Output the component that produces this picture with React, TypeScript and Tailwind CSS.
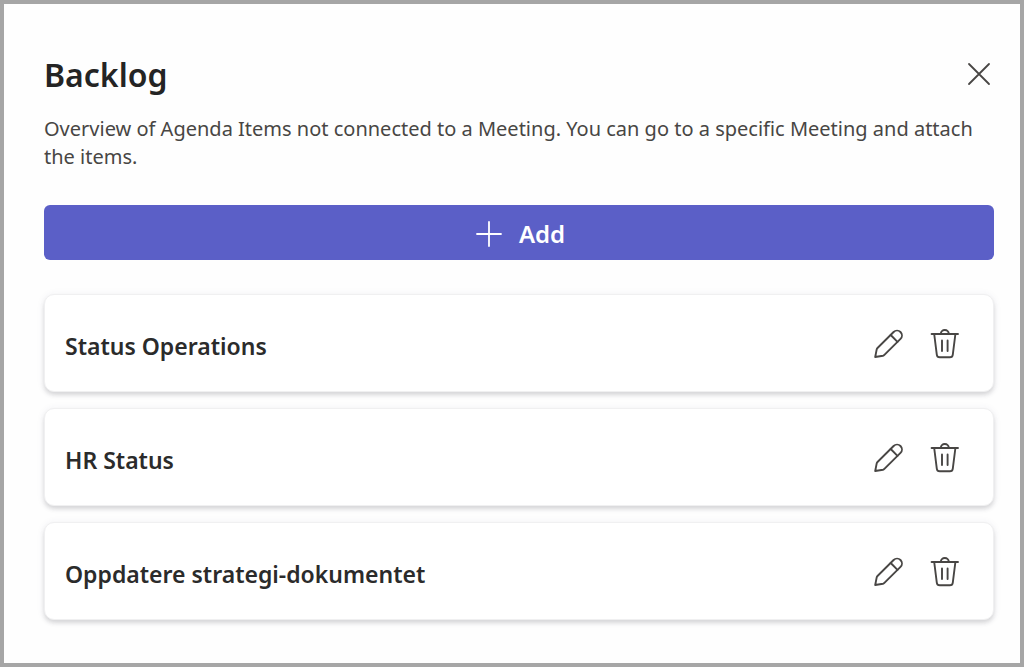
const BACKLOG_ITEMS = [
  { id: 1, title: "Status Operations" },
  { id: 2, title: "HR Status" },
  { id: 3, title: "Oppdatere strategi-dokumentet" },
];

function CloseIcon() {
  return (
    <svg
      viewBox="0 0 24 24"
      className="size-6"
      fill="none"
      stroke="currentColor"
      strokeWidth="1.8"
      strokeLinecap="round"
      aria-hidden="true"
    >
      <path d="M2 2l20 20M22 2L2 22" />
    </svg>
  );
}

function PlusIcon() {
  return (
    <svg
      viewBox="0 0 28 28"
      className="size-7"
      fill="none"
      stroke="currentColor"
      strokeWidth="1.8"
      strokeLinecap="round"
      aria-hidden="true"
    >
      <path d="M14 2v24M2 14h24" />
    </svg>
  );
}

function PencilIcon() {
  return (
    <svg
      viewBox="0 0 32 32"
      className="size-8"
      fill="none"
      stroke="currentColor"
      strokeWidth="1.9"
      strokeLinecap="round"
      strokeLinejoin="round"
      aria-hidden="true"
    >
      <path d="M3.2 29l1.5-7.6c.1-.5.4-1 .8-1.4L21.6 4a4.9 4.9 0 0 1 6.9 0 4.9 4.9 0 0 1 0 6.9L12.4 26.9c-.4.4-.9.7-1.4.8z" />
      <path d="M18.7 7l6.8 6.9" />
    </svg>
  );
}

function TrashIcon() {
  return (
    <svg
      viewBox="0 0 32 32"
      className="size-8"
      fill="none"
      stroke="currentColor"
      strokeWidth="1.9"
      strokeLinecap="round"
      strokeLinejoin="round"
      aria-hidden="true"
    >
      <path d="M3.6 6H30" />
      <path d="M12.8 6a4 4 0 0 1 8 0" />
      <path d="M6.2 6l2.6 20.6a3 3 0 0 0 3 2.7h10a3 3 0 0 0 3-2.7L27.4 6" />
      <path d="M14 12.500V23M19.600 12.500V23" />
    </svg>
  );
}

function BacklogCard({ title }: { title: string }) {
  return (
    <li className="flex h-[98px] items-center justify-between rounded-[10px] border border-[#f0f0f1] bg-white pt-0.5 pr-[33px] pl-5 shadow-[0_3px_4px_rgba(0,0,0,0.13),0_1px_8px_rgba(60,60,120,0.07)]">
      <h2 className="pt-1 text-[23px] font-semibold text-[#2b2b2b]">{title}</h2>
      <div className="flex gap-6 text-[#484644]">
        <button type="button" aria-label={`Edit ${title}`}>
          <PencilIcon />
        </button>
        <button type="button" aria-label={`Delete ${title}`}>
          <TrashIcon />
        </button>
      </div>
    </li>
  );
}

export default function App() {
  return (
    <main className="min-h-screen border-4 border-[#a6a6a6] bg-[#fefefe] pt-12 pr-[26px] pb-10 pl-10 font-['Noto_Sans','Open_Sans',sans-serif]">
      <header>
        <div className="flex items-center justify-between">
          <h1 className="text-[32px] leading-[46px] font-semibold text-[#242424]">
            Backlog
          </h1>
          <button
            type="button"
            aria-label="Close"
            className="mr-[3px] pb-0.5 text-[#484644]"
          >
            <CloseIcon />
          </button>
        </div>
        <p className="mt-[17px] text-xl leading-7 text-[#484644]">
          Overview of Agenda Items not connected to a Meeting. You can go to a
          specific Meeting and attach the items.
        </p>
      </header>

      <button
        type="button"
        className="mt-[34px] flex h-[55px] w-full items-center justify-center gap-4 rounded-md bg-[#5b5fc7] pt-0.5 pl-0.5 text-2xl font-semibold text-white"
      >
        <PlusIcon />
        Add
      </button>

      <ul className="mt-[34px] flex flex-col gap-4" aria-label="Backlog items">
        {BACKLOG_ITEMS.map((item) => (
          <BacklogCard key={item.id} title={item.title} />
        ))}
      </ul>
    </main>
  );
}
